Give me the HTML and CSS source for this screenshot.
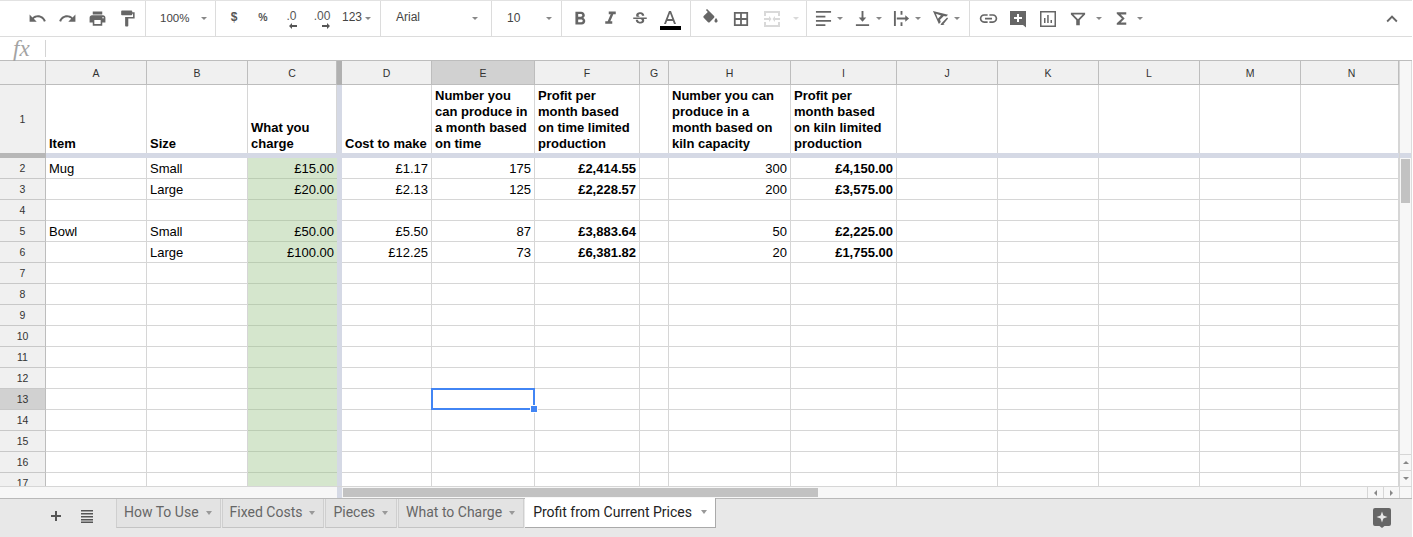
FILE: index.html
```html
<!DOCTYPE html>
<html lang="en">
<head>
<meta charset="utf-8">
<title>Profit from Current Prices</title>
<link rel="stylesheet" href="styles.css">
</head>
<body>
<div class="app">
  <div class="toolbar">
    <div class="group g1">
      <span class="btn"><svg class="ic" viewBox="0 0 24 24"><path d="M12.5 8c-2.65 0-5.05.99-6.9 2.6L2 7v9h9l-3.62-3.62c1.39-1.16 3.16-1.88 5.12-1.88 3.54 0 6.55 2.31 7.6 5.5l2.37-.78C21.08 11.03 17.15 8 12.5 8z"/></svg></span>
      <span class="btn"><svg class="ic" viewBox="0 0 24 24"><path d="M18.4 10.6C16.55 8.99 14.15 8 11.5 8c-4.65 0-8.58 3.03-9.96 7.22L3.9 16c1.05-3.19 4.05-5.5 7.6-5.5 1.95 0 3.73.72 5.12 1.88L13 16h9V7l-3.6 3.6z"/></svg></span>
      <span class="btn"><svg class="ic" viewBox="0 0 24 24"><path d="M19 8H5c-1.66 0-3 1.34-3 3v6h4v4h12v-4h4v-6c0-1.66-1.34-3-3-3zm-3 11H8v-5h8v5zm3-7c-.55 0-1-.45-1-1s.45-1 1-1 1 .45 1 1-.45 1-1 1zm-1-9H6v4h12V3z"/></svg></span>
      <span class="btn"><svg class="ic" viewBox="0 0 24 24"><path d="M18 4V3c0-.55-.45-1-1-1H5c-.55 0-1 .45-1 1v4c0 .55.45 1 1 1h12c.55 0 1-.45 1-1V6h1v4H9v11c0 .55.45 1 1 1h2c.55 0 1-.45 1-1v-9h8V4h-3z"/></svg></span>
    </div>
    <div class="group g2"><span class="val zoomval">100%</span><i class="caret"></i></div>
    <div class="group g3">
      <span class="btn sym">$</span>
      <span class="btn sym pct w28">%</span>
      <span class="btn dec dec-l w29"><span>.0</span><svg class="arrow" viewBox="0 0 8 6"><path d="M3 0v2h5v2H3v2L0 3z"/></svg></span>
      <span class="btn dec dec-r w32"><span>.00</span><svg class="arrow" viewBox="0 0 8 6"><path d="M5 0v2H0v2h5v2l3-3z"/></svg></span>
      <span class="val num">123</span><i class="caret"></i>
    </div>
    <div class="group g4"><span class="val font">Arial</span><i class="caret"></i></div>
    <div class="group g5"><span class="val size">10</span><i class="caret"></i></div>
    <div class="group g6">
      <span class="btn"><svg class="ic-22" viewBox="0 0 24 24"><path d="M15.6 10.79c.97-.67 1.65-1.77 1.65-2.79 0-2.26-1.75-4-4-4H7v14h7.04c2.09 0 3.71-1.7 3.71-3.79 0-1.52-.86-2.82-2.15-3.42zM10 6.5h3c.83 0 1.5.67 1.5 1.5s-.67 1.5-1.5 1.5h-3v-3zm3.5 9H10v-3h3.5c.83 0 1.5.67 1.5 1.5s-.67 1.5-1.5 1.5z"/></svg></span>
      <span class="btn"><svg class="ic-21" viewBox="0 0 24 24"><path d="M10 4v3h2.21l-3.42 8H6v3h8v-3h-2.21l3.42-8H18V4z"/></svg></span>
      <span class="btn"><svg class="ic-18" viewBox="0 0 24 24"><path d="M7.24 8.75c-.26-.48-.39-1.03-.39-1.67 0-.61.13-1.16.4-1.67.26-.5.63-.93 1.11-1.29.48-.35 1.05-.63 1.7-.83.66-.19 1.39-.29 2.18-.29.81 0 1.54.11 2.21.34.66.22 1.23.54 1.69.94.47.4.83.88 1.08 1.43.25.55.38 1.15.38 1.81h-3.01c0-.31-.05-.59-.15-.85-.09-.27-.24-.49-.43-.68-.19-.19-.43-.34-.72-.44-.29-.11-.64-.16-1.02-.16-.38 0-.7.04-.98.13-.28.09-.51.21-.69.36-.18.16-.32.34-.41.55-.09.21-.13.43-.13.66 0 .48.25.88.74 1.21.38.25.77.48 1.41.7H7.39c-.05-.08-.11-.17-.15-.25zM21 12v-2H3v2h9.62c.18.07.4.14.55.2.37.17.66.34.87.51.21.17.35.36.43.57.07.2.11.43.11.69 0 .23-.05.45-.14.66-.09.2-.23.38-.42.53-.19.15-.42.26-.71.35-.29.08-.63.13-1.01.13-.43 0-.83-.04-1.18-.13s-.66-.23-.91-.42c-.25-.19-.45-.44-.59-.75-.14-.31-.25-.76-.25-1.21H6.4c0 .55.08 1.13.24 1.58.16.45.37.85.65 1.21.28.35.6.66.98.92.37.26.78.48 1.22.65.44.17.9.3 1.38.39.48.08.96.13 1.44.13.8 0 1.53-.09 2.18-.28s1.21-.45 1.67-.79c.46-.34.82-.77 1.07-1.27s.38-1.07.38-1.71c0-.6-.1-1.14-.31-1.61-.05-.11-.11-.23-.17-.33H21z"/></svg></span>
      <span class="btn tc"><svg class="ic-a" viewBox="0 0 14 14"><path d="M6 0L1 13h2l1.1-3h5.8l1.100 3h2L8 0H6zM4.800 8L7 2.200 9.200 8H4.800z"/></svg><i class="tcbar"></i></span>
    </div>
    <div class="group g7">
      <span class="btn"><svg class="ic" viewBox="0 0 24 24"><path d="M7.600 0L6.200 1.400l2.400 2.400-5.200 5.100c-.6.6-.6 1.600 0 2.200l5.500 5.500c.6.6 1.500.6 2.100 0l5.500-5.500c.6-.6.6-1.600 0-2.200L7.600 0zM19 11.500s-2 2.200-2 3.500c0 1.100.9 2 2 2s2-.9 2-2c0-1.300-2-3.500-2-3.500z"/></svg></span>
      <span class="btn"><svg class="ic-16" viewBox="0 0 18 18"><path fill-rule="evenodd" d="M1 1h16v16H1V1zm2 2v5h5V3H3zm7 0v5h5V3h-5zM3 10v5h5v-5H3zm7 0v5h5v-5h-5z"/></svg></span>
      <span class="btn off"><svg class="ic-18" viewBox="0 0 18 18"><path d="M1 1h16v2H1zM1 15h16v2H1zM1 3h2v3H1zM15 3h2v3h-2zM1 12h2v3H1zM15 12h2v3h-2zM1 8h5V6l2.500 3L6 12v-2H1zM17 8h-5V6L9.500 9l2.500 3v-2h5z"/></svg></span>
      <i class="caret off-caret mrg"></i>
    </div>
    <div class="group g8">
      <span class="pair"><span class="btn w26"><svg class="ic-17" viewBox="0 0 18 18"><path d="M1 1h16v2H1zM1 6h10v2H1zM1 10.500h16v2H1zM1 15h10v2H1z"/></svg></span><span class="cw"><i class="caret"></i></span></span>
      <span class="pair"><span class="btn w26"><svg class="ic-17" viewBox="0 0 18 18"><path d="M8 1h2v7h3l-4 4.500L5 8h3zM2 15h14v2H2z"/></svg></span><span class="cw"><i class="caret"></i></span></span>
      <span class="pair"><span class="btn w26"><svg class="ic-17" viewBox="0 0 18 18"><path d="M1 1h2v16H1zM8 1h2v4H8zM8 13h2v4H8zM4 8h9V5.500L17 9l-4 3.500V10H4z"/></svg></span><span class="cw"><i class="caret"></i></span></span>
      <span class="pair"><span class="btn w26"><svg class="ic-17" viewBox="0 0 18 18"><path d="M1 1l16 4-2 2-2.500-.7-4 4 .8 2.500-2 2L1 1zm3.200 3l2 5.200 3.300-3.400L4.200 4zM10 14l6-6 1 1-5 6 1.500 1H9z"/></svg></span><span class="cw"><i class="caret"></i></span></span>
    </div>
    <div class="group g9">
      <span class="btn"><svg class="ic-21" viewBox="0 0 24 24"><path d="M3.900 12c0-1.710 1.390-3.100 3.100-3.100h4V7H7c-2.760 0-5 2.240-5 5s2.240 5 5 5h4v-1.900H7c-1.710 0-3.100-1.390-3.100-3.100zM8 13h8v-2H8v2zm9-6h-4v1.900h4c1.710 0 3.100 1.390 3.100 3.100s-1.390 3.100-3.100 3.100h-4V17h4c2.760 0 5-2.240 5-5s-2.240-5-5-5z"/></svg></span>
      <span class="btn"><svg class="ic-18" viewBox="0 0 18 18"><path fill-rule="evenodd" d="M1 1h16v16.500L14 15H1V1zm7 3v3H5v2h3v3h2V9h3V7h-3V4H8z"/></svg></span>
      <span class="btn"><svg class="ic-18" viewBox="0 0 18 18"><path fill-rule="evenodd" d="M1 1h16v16H1V1zm1.500 1.500v13h13v-13h-13zM5 8h1.500v5H5zM8.200 5h1.500v8H8.200zM11.500 10H13v3h-1.500z"/></svg></span>
      <span class="btn"><svg class="ic-16" viewBox="0 0 18 18"><path fill-rule="evenodd" d="M1 2h16v2l-6 6v6H7v-6L1 4V2zm2.800 2L9 9.200 14.200 4H3.800z"/></svg></span>
      <span class="cw cw-f"><i class="caret"></i></span>
      <span class="btn"><svg class="ic" viewBox="0 0 24 24"><path d="M18 4H6v2l6.500 6L6 18v2h12v-3h-7l5-5-5-5h7z"/></svg></span>
      <span class="cw"><i class="caret"></i></span>
      <span class="btn collapse"><svg class="ic-22" viewBox="0 0 24 24"><path d="M12 8l-6 6 1.410 1.410L12 10.830l4.590 4.580L18 14z"/></svg></span>
    </div>
  </div>

  <div class="formula">
    <span class="fx">fx</span>
    <span class="fx-sep"></span>
  </div>

  <div class="sheet">
    <div class="gridwrap">
      <table class="grid">
        <colgroup>
          <col class="c-rh"><col class="c-101"><col class="c-101"><col class="c-c"><col class="c-fz"><col class="c-d"><col class="c-e"><col class="c-f"><col class="c-g"><col class="c-h"><col class="c-i"><col class="c-101"><col class="c-101"><col class="c-101"><col class="c-101"><col class="c-n">
        </colgroup>
        <tr class="head"><th class="rh"></th><th>A</th><th>B</th><th>C</th><th class="fzh"></th><th>D</th><th class="act">E</th><th>F</th><th>G</th><th>H</th><th>I</th><th>J</th><th>K</th><th>L</th><th>M</th><th class="last">N</th></tr>
        <tr class="r1"><th class="rh">1</th><td>Item</td><td>Size</td><td>What you charge</td><td class="fz"></td><td>Cost to make</td><td>Number you can produce in a month based on time</td><td>Profit per month based on time limited production</td><td></td><td>Number you can produce in a month based on kiln capacity</td><td>Profit per month based on kiln limited production</td><td></td><td></td><td></td><td></td><td></td></tr>
        <tr class="frz"><th class="rh"></th><td colspan="15"></td></tr>
        <tr><th class="rh">2</th><td>Mug</td><td>Small</td><td class="g r">£15.00</td><td class="fz"></td><td class="r">£1.17</td><td class="r">175</td><td class="r b">£2,414.55</td><td></td><td class="r">300</td><td class="r b">£4,150.00</td><td></td><td></td><td></td><td></td><td></td></tr>
        <tr><th class="rh">3</th><td></td><td>Large</td><td class="g r">£20.00</td><td class="fz"></td><td class="r">£2.13</td><td class="r">125</td><td class="r b">£2,228.57</td><td></td><td class="r">200</td><td class="r b">£3,575.00</td><td></td><td></td><td></td><td></td><td></td></tr>
        <tr><th class="rh">4</th><td></td><td></td><td class="g"></td><td class="fz"></td><td></td><td></td><td></td><td></td><td></td><td></td><td></td><td></td><td></td><td></td><td></td></tr>
        <tr><th class="rh">5</th><td>Bowl</td><td>Small</td><td class="g r">£50.00</td><td class="fz"></td><td class="r">£5.50</td><td class="r">87</td><td class="r b">£3,883.64</td><td></td><td class="r">50</td><td class="r b">£2,225.00</td><td></td><td></td><td></td><td></td><td></td></tr>
        <tr><th class="rh">6</th><td></td><td>Large</td><td class="g r">£100.00</td><td class="fz"></td><td class="r">£12.25</td><td class="r">73</td><td class="r b">£6,381.82</td><td></td><td class="r">20</td><td class="r b">£1,755.00</td><td></td><td></td><td></td><td></td><td></td></tr>
        <tr><th class="rh">7</th><td></td><td></td><td class="g"></td><td class="fz"></td><td></td><td></td><td></td><td></td><td></td><td></td><td></td><td></td><td></td><td></td><td></td></tr>
        <tr><th class="rh">8</th><td></td><td></td><td class="g"></td><td class="fz"></td><td></td><td></td><td></td><td></td><td></td><td></td><td></td><td></td><td></td><td></td><td></td></tr>
        <tr><th class="rh">9</th><td></td><td></td><td class="g"></td><td class="fz"></td><td></td><td></td><td></td><td></td><td></td><td></td><td></td><td></td><td></td><td></td><td></td></tr>
        <tr><th class="rh">10</th><td></td><td></td><td class="g"></td><td class="fz"></td><td></td><td></td><td></td><td></td><td></td><td></td><td></td><td></td><td></td><td></td><td></td></tr>
        <tr><th class="rh">11</th><td></td><td></td><td class="g"></td><td class="fz"></td><td></td><td></td><td></td><td></td><td></td><td></td><td></td><td></td><td></td><td></td><td></td></tr>
        <tr><th class="rh">12</th><td></td><td></td><td class="g"></td><td class="fz"></td><td></td><td></td><td></td><td></td><td></td><td></td><td></td><td></td><td></td><td></td><td></td></tr>
        <tr><th class="rh act">13</th><td></td><td></td><td class="g"></td><td class="fz"></td><td></td><td class="sel"><span class="selbox"><i class="handle"></i></span></td><td></td><td></td><td></td><td></td><td></td><td></td><td></td><td></td><td></td></tr>
        <tr><th class="rh">14</th><td></td><td></td><td class="g"></td><td class="fz"></td><td></td><td></td><td></td><td></td><td></td><td></td><td></td><td></td><td></td><td></td><td></td></tr>
        <tr><th class="rh">15</th><td></td><td></td><td class="g"></td><td class="fz"></td><td></td><td></td><td></td><td></td><td></td><td></td><td></td><td></td><td></td><td></td><td></td></tr>
        <tr><th class="rh">16</th><td></td><td></td><td class="g"></td><td class="fz"></td><td></td><td></td><td></td><td></td><td></td><td></td><td></td><td></td><td></td><td></td><td></td></tr>
        <tr><th class="rh">17</th><td></td><td></td><td class="g"></td><td class="fz"></td><td></td><td></td><td></td><td></td><td></td><td></td><td></td><td></td><td></td><td></td><td></td></tr>
      </table>
    </div>
    <div class="vscroll">
      <div class="v-top"></div>
      <div class="v-band"></div>
      <div class="v-track"><div class="v-thumb"></div></div>
      <div class="v-btn"><i class="tri-up"></i></div>
      <div class="v-btn"><i class="tri-down"></i></div>
    </div>
  </div>

  <div class="hscroll">
    <div class="h-left"></div>
    <div class="h-fz"></div>
    <div class="h-thumb"></div>
    <div class="h-rest"></div>
    <div class="h-btn"><i class="tri-left"></i></div>
    <div class="h-btn"><i class="tri-right"></i></div>
    <div class="h-corner"></div>
  </div>

  <div class="tabbar">
    <span class="tb-btn"><svg class="tb-ic" viewBox="0 0 14 14"><path d="M6 2h2v4h4v2H8v4H6V8H2V6h4z"/></svg></span>
    <span class="tb-btn"><svg class="tb-ic" viewBox="0 0 14 14"><path d="M1 1h12v1.500H1zM1 4h12v1.500H1zM1 7h12v1.500H1zM1 10h12v1.500H1zM1 12.500h12V14H1z"/></svg></span>
    <div class="tabs">
      <div class="tab"><span>How To Use</span><i class="tcaret"></i></div>
      <div class="tab"><span>Fixed Costs</span><i class="tcaret"></i></div>
      <div class="tab"><span>Pieces</span><i class="tcaret"></i></div>
      <div class="tab"><span>What to Charge</span><i class="tcaret"></i></div>
      <div class="tab active"><span>Profit from Current Prices</span><i class="tcaret"></i></div>
    </div>
    <span class="explore"><svg viewBox="0 0 18 20" class="ex-ic"><path fill-rule="evenodd" d="M2 0h14a2 2 0 0 1 2 2v14a2 2 0 0 1-2 2h-4.500L9 20l-2.500-2H2a2 2 0 0 1-2-2V2a2 2 0 0 1 2-2zm7 3.500l-1.400 4.100L3.500 9l4.100 1.400L9 14.500l1.400-4.100L14.500 9l-4.100-1.400z"/></svg></span>
  </div>
</div>
</body>
</html>
```

FILE: styles.css
```css
* { box-sizing: border-box; }
html, body { margin: 0; padding: 0; background: #fff; }
body { width: 1413px; height: 537px; overflow: hidden; font-family: "Liberation Sans", Arial, sans-serif; }
.app { width: 1412px; height: 537px; display: flex; flex-direction: column; }

/* Toolbar */
.toolbar { height: 37px; display: flex; border-top: 1px solid #e2e2e2; border-bottom: 1px solid #dcdcdc; }
.group { display: flex; align-items: center; height: 100%; border-right: 1px solid #dcdcdc; }
.g1 { width: 146px; padding-left: 22px; }
.g2 { width: 70px; padding-left: 14px; }
.g3 { width: 165px; padding-left: 3px; }
.g4 { width: 111px; padding-left: 15px; }
.g5 { width: 70px; padding-left: 15px; }
.g6 { width: 129px; padding-left: 3px; }
.g7 { width: 116px; padding-left: 4px; gap: 1px; }
.g8 { width: 163px; padding-left: 3px; }
.g9 { flex: 1; padding-left: 3px; border-right: 0; }
.btn { width: 30px; height: 30px; flex: none; display: flex; align-items: center; justify-content: center; color: #444; font-size: 12px; }
.w26 { width: 26px; }
.w28 { width: 28px; }
.w29 { width: 29px; }
.w32 { width: 32px; }
.ic, .ic-16, .ic-17, .ic-18, .ic-21, .ic-22 { fill: #666; display: block; flex: none; }
.ic { width: 19px; height: 19px; }
.ic-16 { width: 16px; height: 16px; }
.ic-17 { width: 17px; height: 17px; }
.ic-18 { width: 18px; height: 18px; }
.ic-21 { width: 21px; height: 21px; }
.ic-22 { width: 22px; height: 22px; }
.off .ic-18 { fill: #d9d9d9; }
.sym { font-weight: 700; color: #555; padding-bottom: 3px; }
.pct { font-size: 10.500px; }
.dec { flex-direction: column; line-height: 12px; padding-top: 1px; color: #555; }
.arrow { width: 8px; height: 6px; fill: #555; display: block; margin-top: 1px; }
.dec-l .arrow { margin-left: 3px; }
.dec-r .arrow { margin-left: 8px; }
.val { color: #444; line-height: 14px; padding-bottom: 1px; }
.zoomval { font-size: 11.500px; width: 29px; }
.num { font-size: 12px; width: 20px; margin-left: 4px; padding-bottom: 4px; }
.font { font-size: 12px; width: 76px; padding-bottom: 3px; }
.size { font-size: 12px; width: 39px; }
.g2 .caret { margin-left: 12px; }
.g3 .caret { margin-left: 3px; }
.caret { display: block; width: 0; height: 0; border-left: 3px solid transparent; border-right: 3px solid transparent; border-top: 3px solid #888; flex: none; }
.off-caret { border-top-color: #d9d9d9; }
.mrg { margin-left: 5px; }
.pair { display: flex; align-items: center; width: 39px; flex: none; }
.cw { width: 8px; flex: none; display: flex; justify-content: center; }
.cw-f { margin: 0 3px 0 2px; }
.tc { flex-direction: column; }
.ic-a { width: 14px; height: 14px; fill: #666; display: block; margin-bottom: 1px; }
.tcbar { display: block; width: 21px; height: 4px; background: #000; margin-bottom: -3px; }
.collapse { margin-left: auto; margin-right: 5px; }

/* Formula bar */
.formula { height: 24px; display: flex; align-items: center; border-bottom: 1px solid #bdbdbd; }
.fx { width: 45px; padding-left: 13px; font-family: "Liberation Serif", serif; font-style: italic; font-size: 23px; color: #a3a3a3; line-height: 20px; }
.fx-sep { width: 1px; height: 17px; background: #d4d4d4; }

/* Sheet */
.sheet { height: 425px; display: flex; }
.gridwrap { width: 1399px; height: 425px; overflow: hidden; }
.grid { border-collapse: separate; border-spacing: 0; table-layout: fixed; width: 1399px; font-size: 13px; color: #000; }
.c-rh { width: 46px; }
.c-101 { width: 101px; }
.c-c { width: 89px; }
.c-fz { width: 5px; }
.c-d { width: 90px; }
.c-e { width: 103px; }
.c-f { width: 105px; }
.c-g { width: 29px; }
.c-h { width: 122px; }
.c-i { width: 106px; }
.c-n { width: 98px; }
.grid td, .grid th { padding: 0 3px; border-right: 1px solid #d6d6d6; border-bottom: 1px solid #d6d6d6; height: 21px; line-height: 20px; white-space: nowrap; overflow: hidden; }
.grid td { padding-top: 2px; line-height: 18px; }
.grid th { font-weight: 400; font-size: 10.500px; color: #333; background: #f0f0f0; text-align: center; border-right-color: #bdbdbd; border-bottom-color: #c8c8c8; }
.grid .head th { height: 24px; border-bottom-color: #bdbdbd; padding-top: 1px; }
.grid .head th.last { padding-left: 7px; }
.grid .head .act, .grid th.act { background: #d1d1d1; }
.grid .r1 td { height: 68px; border-bottom: 0; white-space: normal; vertical-align: bottom; font-weight: 700; line-height: 16px; padding-top: 0; padding-bottom: 1px; }
.grid .r1 th { height: 68px; border-bottom: 0; }
.grid .frz th, .grid .frz td { height: 5px; padding: 0; border: 0; line-height: 0; font-size: 0; }
.grid .frz th { background: #b7b7b7; }
.grid .frz td { background: #d5d9e5; }
.grid .fzh, .grid .head th.fzh { padding: 0; border: 0; background: #b0b0b0; }
.grid td.fz { padding: 0; border: 0; background: #d5d9e5; }
.grid td.g { background: #d5e6cd; border-bottom-color: #bccdb4; border-right: 0; }
.grid .r { text-align: right; }
.grid .b { font-weight: 700; }
.grid td.sel { position: relative; overflow: visible; }
.selbox { position: absolute; left: -1px; top: -1px; width: 104px; height: 22px; border: 2px solid #4285f4; z-index: 2; }
.handle { position: absolute; right: -5px; bottom: -5px; width: 6px; height: 6px; background: #4285f4; border: 1px solid #fff; box-sizing: content-box; }

/* Vertical scrollbar */
.vscroll { width: 13px; height: 425px; display: flex; flex-direction: column; background: #f7f7f7; border-left: 1px solid #d6d6d6; border-right: 1px solid #dcdcdc; }
.v-top { height: 92px; }
.v-band { height: 5px; background: #d5d9e5; }
.v-track { height: 296px; padding: 1px 1px 0 1px; }
.v-thumb { height: 44px; width: 9px; background: #c2c2c2; }
.v-btn { height: 16px; border-top: 1px solid #d6d6d6; display: flex; align-items: center; justify-content: center; }
.tri-up { border-left: 3px solid transparent; border-right: 3px solid transparent; border-bottom: 3px solid #888; }
.tri-down { border-left: 3px solid transparent; border-right: 3px solid transparent; border-top: 3px solid #888; }

/* Horizontal scrollbar */
.hscroll { height: 12px; display: flex; background: #f7f7f7; border-top: 1px solid #d6d6d6; }
.h-left { width: 337px; }
.h-fz { width: 5px; background: #d5d9e5; }
.h-thumb { width: 475px; height: 9px; margin: 1px 0 0 1px; background: #c2c2c2; }
.h-rest { flex: 1; }
.h-btn { width: 16px; display: flex; align-items: center; justify-content: center; border-left: 1px solid #d6d6d6; }
.h-corner { width: 13px; border-left: 1px solid #d6d6d6; border-right: 1px solid #dcdcdc; }
.tri-left { border-top: 3px solid transparent; border-bottom: 3px solid transparent; border-right: 3px solid #888; }
.tri-right { border-top: 3px solid transparent; border-bottom: 3px solid transparent; border-left: 3px solid #888; }

/* Tab bar */
.tabbar { flex: 1; display: flex; align-items: flex-start; padding-left: 41px; background: #e8e8e8; border-top: 1px solid #b9b9b9; }
.tb-btn { width: 30px; height: 34px; margin-right: 1px; flex: none; display: flex; align-items: center; justify-content: center; }
.tb-ic { width: 14px; height: 14px; fill: #555; display: block; }
.tabs { display: flex; margin-left: 13px; gap: 1px; }
.tab { height: 29px; display: flex; align-items: center; gap: 7px; padding: 0 8px 2px 7px; font-family: Roboto, "Liberation Sans", sans-serif; font-size: 14px; color: #666; background: #e3e3e3; border: 1px solid #cfcfcf; border-top: 0; border-bottom: 1px solid #c4c4c4; }
.tab.active { height: 30px; margin-top: -1px; padding-top: 0; background: #fff; color: #222; border: 0; border-right: 1px solid #aaa; border-bottom: 1px solid #aaa; padding-left: 8px; gap: 9px; }
.tcaret { display: block; border-left: 3.500px solid transparent; border-right: 3.500px solid transparent; border-top: 4px solid #999; margin-bottom: -1px; }
.explore { margin: 9px 21px 0 auto; flex: none; }
.ex-ic { width: 18px; height: 20px; fill: #666; display: block; }
```
